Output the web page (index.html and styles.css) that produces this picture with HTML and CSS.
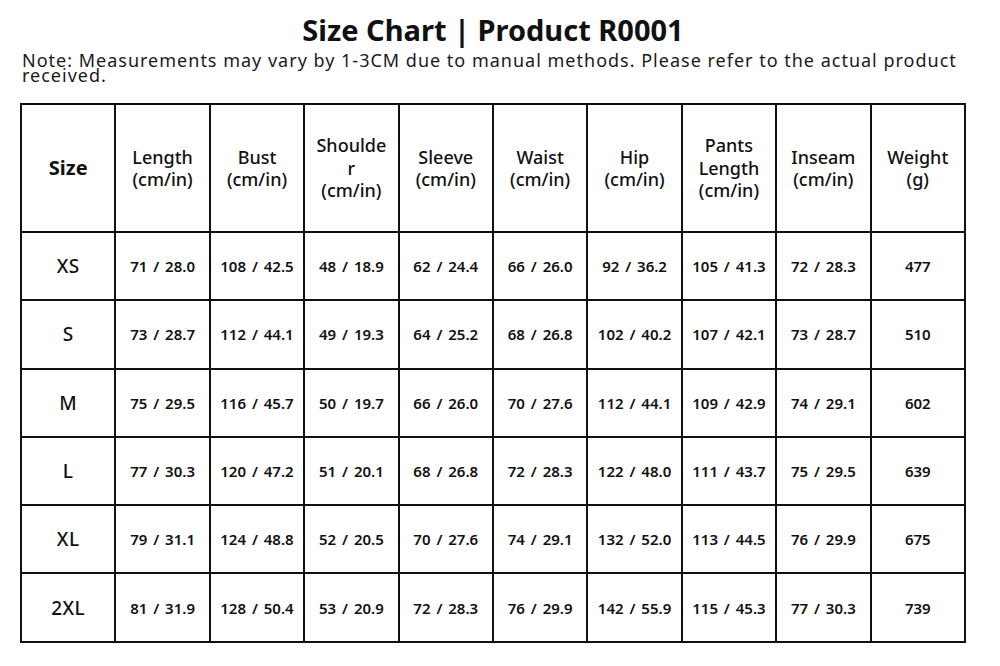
FILE: index.html
```html
<!DOCTYPE html>
<html>
<head>
<meta charset="utf-8">
<link rel="stylesheet" href="styles.css">
</head>
<body>
<div class="page">
  <h1 class="title">Size Chart | Product R0001</h1>
  <p class="note">Note: Measurements may vary by 1-3CM due to manual methods. Please refer to the actual product received.</p>
  <table class="chart">
    <thead>
      <tr>
        <th class="size-head">Size</th>
        <th>Length (cm/in)</th>
        <th>Bust (cm/in)</th>
        <th>Shoulder (cm/in)</th>
        <th>Sleeve (cm/in)</th>
        <th>Waist (cm/in)</th>
        <th>Hip (cm/in)</th>
        <th>Pants Length (cm/in)</th>
        <th>Inseam (cm/in)</th>
        <th>Weight (g)</th>
      </tr>
    </thead>
    <tbody>
      <tr><td class="size">XS</td><td>71 / 28.0</td><td>108 / 42.5</td><td>48 / 18.9</td><td>62 / 24.4</td><td>66 / 26.0</td><td>92 / 36.2</td><td>105 / 41.3</td><td>72 / 28.3</td><td>477</td></tr>
      <tr><td class="size">S</td><td>73 / 28.7</td><td>112 / 44.1</td><td>49 / 19.3</td><td>64 / 25.2</td><td>68 / 26.8</td><td>102 / 40.2</td><td>107 / 42.1</td><td>73 / 28.7</td><td>510</td></tr>
      <tr><td class="size">M</td><td>75 / 29.5</td><td>116 / 45.7</td><td>50 / 19.7</td><td>66 / 26.0</td><td>70 / 27.6</td><td>112 / 44.1</td><td>109 / 42.9</td><td>74 / 29.1</td><td>602</td></tr>
      <tr><td class="size">L</td><td>77 / 30.3</td><td>120 / 47.2</td><td>51 / 20.1</td><td>68 / 26.8</td><td>72 / 28.3</td><td>122 / 48.0</td><td>111 / 43.7</td><td>75 / 29.5</td><td>639</td></tr>
      <tr><td class="size">XL</td><td>79 / 31.1</td><td>124 / 48.8</td><td>52 / 20.5</td><td>70 / 27.6</td><td>74 / 29.1</td><td>132 / 52.0</td><td>113 / 44.5</td><td>76 / 29.9</td><td>675</td></tr>
      <tr><td class="size">2XL</td><td>81 / 31.9</td><td>128 / 50.4</td><td>53 / 20.9</td><td>72 / 28.3</td><td>76 / 29.9</td><td>142 / 55.9</td><td>115 / 45.3</td><td>77 / 30.3</td><td>739</td></tr>
    </tbody>
  </table>
</div>
</body>
</html>
```

FILE: styles.css
```css
html, body {
  margin: 0;
  padding: 0;
  background: #ffffff;
}

body {
  font-family: "Noto Sans", "Liberation Sans", sans-serif;
  color: #111111;
}

.page {
  width: 946px;
  margin-left: 20px;
  padding-top: 12px;
}

.title {
  margin: 0;
  font-size: 29px;
  line-height: 36px;
  font-weight: 700;
  text-align: center;
  color: #111;
}

.note {
  margin: 5px 0 0 2px;
  font-size: 18px;
  line-height: 15px;
  font-weight: 400;
  letter-spacing: 1px;
  color: #1a1a1a;
}

.chart {
  margin-top: 20px;
  width: 946px;
  table-layout: fixed;
  border-collapse: collapse;
  border: 2px solid #111;
}

.chart th,
.chart td {
  border: 2px solid #111;
  text-align: center;
  vertical-align: middle;
  padding: 0 10px;
  overflow-wrap: anywhere;
}

.chart th {
  height: 126px;
  font-size: 18px;
  line-height: 22.5px;
  font-weight: 500;
}

.chart th.size-head {
  font-size: 20px;
  font-weight: 700;
}

.chart td {
  height: 66.3px;
  padding: 0 4px;
  font-size: 15px;
  font-weight: 600;
  word-spacing: 2px;
}

.chart td.size {
  font-size: 19px;
  font-weight: 500;
  letter-spacing: 0.5px;
}
```
